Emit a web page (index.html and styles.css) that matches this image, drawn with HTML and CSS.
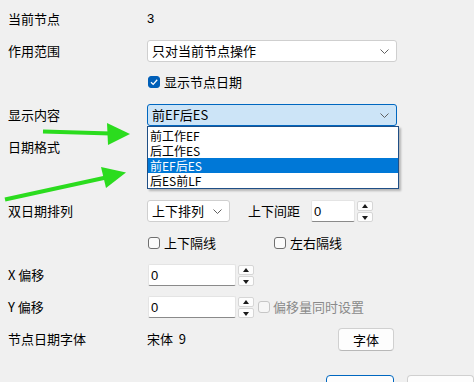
FILE: index.html
```html
<!DOCTYPE html>
<html lang="zh-CN">
<head>
  <meta charset="UTF-8">
  <title>节点日期设置</title>
  <link rel="stylesheet" href="styles.css">
</head>
<body>

  <div class="form">

    <div class="row">
      <span class="label">当前节点</span>
      <span class="value">3</span>
    </div>

    <div class="row">
      <span class="label">作用范围</span>
      <div class="combo wide">
        <span>只对当前节点操作</span>
        <svg class="chev" width="9" height="5" viewBox="0 0 9 5"><polyline points="0.5,0.5 4.5,4.5 8.5,0.5"/></svg>
      </div>
    </div>

    <div class="row check-row">
      <span class="label"></span>
      <label class="check">
        <span class="box checked">
          <svg width="12" height="12" viewBox="0 0 12 12"><polyline points="3,6.2 5.2,8.4 9.2,3.8"/></svg>
        </span>
        显示节点日期
      </label>
    </div>

    <!-- Display content combo with open list -->
    <div class="row">
      <span class="label">显示内容</span>
      <div class="combo wide focus">
        <span>前EF后ES</span>
        <svg class="chev" width="9" height="5" viewBox="0 0 9 5"><polyline points="0.5,0.5 4.5,4.5 8.5,0.5"/></svg>
        <ul class="dropdown">
          <li>前工作EF</li>
          <li>后工作ES</li>
          <li class="sel">前EF后ES</li>
          <li>后ES前LF</li>
        </ul>
      </div>
    </div>

    <div class="row">
      <span class="label">日期格式</span>
    </div>

    <div class="row after-list">
      <span class="label">双日期排列</span>
      <div class="combo small">
        <span>上下排列</span>
        <svg class="chev" width="9" height="5" viewBox="0 0 9 5"><polyline points="0.5,0.5 4.5,4.5 8.5,0.5"/></svg>
      </div>
      <span class="sub-label">上下间距</span>
      <div class="spin">
        <input class="num short" value="0">
        <div class="spin-btns">
          <span class="up"></span>
          <span class="down"></span>
        </div>
      </div>
    </div>

    <div class="row">
      <span class="label"></span>
      <label class="check"><span class="box"></span>上下隔线</label>
      <label class="check right"><span class="box"></span>左右隔线</label>
    </div>

    <div class="row">
      <span class="label">X 偏移</span>
      <div class="spin">
        <input class="num" value="0">
        <div class="spin-btns">
          <span class="up"></span>
          <span class="down"></span>
        </div>
      </div>
    </div>

    <div class="row">
      <span class="label">Y 偏移</span>
      <div class="spin">
        <input class="num" value="0">
        <div class="spin-btns">
          <span class="up"></span>
          <span class="down"></span>
        </div>
      </div>
      <label class="check disabled"><span class="box"></span>偏移量同时设置</label>
    </div>

    <div class="row">
      <span class="label">节点日期字体</span>
      <span class="value font-name">宋体&nbsp;&nbsp;9</span>
      <button class="btn font-btn">字体</button>
    </div>

    <div class="row footer">
      <button class="btn default">确定</button>
      <button class="btn">取消</button>
    </div>

  </div>

  <!-- green annotation arrows -->
  <svg class="arrows" width="474" height="382" viewBox="0 0 474 382">
    <line x1="43" y1="131.5" x2="111" y2="133.5"/>
    <polygon points="107,123 130,134 108,145"/>
    <line x1="5" y1="199.5" x2="106" y2="177.5"/>
    <polygon points="101,167 126,172.5 106,188"/>
  </svg>

</body>
</html>
```

FILE: styles.css
```css
body {
  margin: 0;
  background: #f0f0f0;
  font-family: "Noto Sans CJK SC", "Noto Sans", sans-serif;
  font-size: 13px;
  color: #000;
  width: 474px;
  height: 382px;
  overflow: hidden;
  position: relative;
}

.form {
  display: flex;
  flex-direction: column;
  gap: 10px;
  padding: 8px 0 0 8px;
}

.row {
  display: flex;
  align-items: center;
  height: 22px;
  line-height: 16px;
}

.row.check-row {
  margin-top: -1px;
  margin-bottom: 1px;
}

.row.after-list {
  margin-top: 32px;
}

.label {
  width: 139px;
  flex-shrink: 0;
}

.value {
  font-family: "Liberation Sans", "Noto Sans CJK SC", sans-serif;
}

/* Combo boxes */
.combo {
  position: relative;
  box-sizing: border-box;
  height: 22px;
  background: #fff;
  border: 1px solid #cfcfcf;
  border-radius: 3px;
  display: flex;
  align-items: center;
  padding-left: 4px;
}

.combo.wide {
  width: 250px;
}

.combo.small {
  width: 83px;
}

.combo.focus {
  background: #cce4f7;
  border-color: #0067c0;
}

.chev {
  position: absolute;
  right: 7px;
  top: 8px;
  fill: none;
  stroke: #606060;
  stroke-width: 1;
}

.dropdown {
  position: absolute;
  left: -1px;
  top: 21px;
  width: 250px;
  margin: 0;
  padding: 1px 0 0;
  list-style: none;
  background: #fff;
  border: 1px solid #1f4f86;
  box-shadow: 2px 2px 2px rgba(0, 0, 0, 0.25);
  z-index: 10;
  font-size: 12px;
}

.dropdown li {
  height: 15px;
  line-height: 15px;
  padding-left: 2px;
}

.dropdown li.sel {
  background: #0078d7;
  color: #fff;
}

/* Checkboxes */
.check {
  display: flex;
  align-items: center;
  gap: 4px;
  margin-left: 1px;
}

.check.right {
  margin-left: 58px;
}

.box {
  box-sizing: border-box;
  width: 12px;
  height: 12px;
  border: 1px solid #6f6f6f;
  border-radius: 3px;
  background: #fbfbfb;
  display: flex;
}

.box.checked {
  background: #005fb8;
  border-color: #005fb8;
}

.box svg {
  margin: -1px;
  fill: none;
  stroke: #fff;
  stroke-width: 1.3;
}

.check.disabled {
  color: #8a8a8a;
  margin-left: 4px;
  gap: 3px;
}

.check.disabled .box {
  border-color: #c6c6c6;
  background: #f6f6f6;
}

/* Spin boxes */
.sub-label {
  margin-left: 18px;
  margin-right: 11px;
}

.spin {
  display: flex;
  align-items: center;
  gap: 2px;
}

.num {
  box-sizing: border-box;
  width: 88px;
  height: 22px;
  margin: 0 0 0 1px;
  padding: 0 0 0 2px;
  border: 1px solid #e4e4e4;
  border-bottom: 1px solid #8a8a8a;
  border-radius: 2px;
  background: #fff;
  font-family: "Liberation Sans", sans-serif;
  font-size: 13px;
  color: #000;
  outline: none;
}

.num.short {
  width: 44px;
  margin-left: 0;
}

.spin-btns {
  display: flex;
  flex-direction: column;
  gap: 1px;
}

.spin-btns span {
  box-sizing: border-box;
  width: 16px;
  height: 10px;
  border: 1px solid #d6d6d6;
  border-radius: 2px;
  background: #fdfdfd;
  position: relative;
}

.spin-btns span::after {
  content: "";
  position: absolute;
  left: 4px;
  top: 2px;
  border-left: 3.5px solid transparent;
  border-right: 3.5px solid transparent;
}

.spin-btns .up::after {
  border-bottom: 4px solid #1a1a1a;
}

.spin-btns .down::after {
  top: 3px;
  border-top: 4px solid #1a1a1a;
}

/* Buttons */
.btn {
  box-sizing: border-box;
  height: 23px;
  background: #fdfdfd;
  border: 1px solid #d0d0d0;
  border-bottom-color: #b8b8b8;
  border-radius: 4px;
  font-family: "Noto Sans CJK SC", sans-serif;
  font-size: 13px;
  color: #000;
  padding: 0;
}

.font-name {
  width: 191px;
  font-family: "Noto Sans CJK SC", sans-serif;
}

.font-btn {
  width: 56px;
}

.footer {
  margin-top: 15px;
  padding-left: 318px;
  gap: 13px;
  align-items: flex-start;
}

.footer .btn {
  width: 71px;
  height: 24px;
  padding-top: 5px;
  line-height: 16px;
}

.footer .btn.default {
  border: 1px solid #0067c0;
}

/* annotation overlay */
.arrows {
  position: absolute;
  left: 0;
  top: 0;
  pointer-events: none;
  z-index: 20;
}

.arrows line {
  stroke: #2bdc1e;
  stroke-width: 4;
}

.arrows polygon {
  fill: #2bdc1e;
}
```
